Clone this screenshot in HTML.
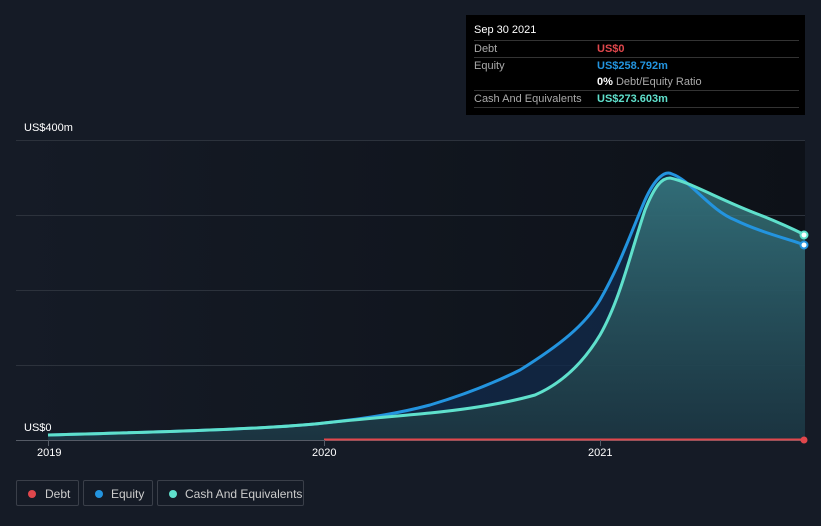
<!DOCTYPE html>
<html><head><style>
body{margin:0;width:821px;height:526px;background:#151b26;font-family:"Liberation Sans",sans-serif;overflow:hidden;position:relative}
.t{position:absolute;font-size:11px;color:#fff}
.tip{position:absolute;left:466px;top:15px;width:339px;height:100px;background:#000;font-size:11px}
.tip .r{position:absolute;left:8px;right:6px;border-top:1px solid #333;height:16px}
.leg{position:absolute;top:480px;height:26px;border:1px solid #3a3f49;border-radius:2px;color:#ccc;font-size:12px;line-height:26px;box-sizing:border-box}
.leg i{position:absolute;left:11px;top:9px;width:8px;height:8px;border-radius:50%}
</style></head><body>
<svg width="821" height="526" style="position:absolute;left:0;top:0">
<defs><linearGradient id="bg" x1="0" x2="1"><stop offset="0" stop-color="#151b26"/><stop offset="1" stop-color="#0d1118"/></linearGradient>
<linearGradient id="cf" x1="0" y1="0" x2="0" y2="1"><stop offset="0" stop-color="#3a7f85" stop-opacity="0.8"/><stop offset="1" stop-color="#1f3a40" stop-opacity="0.7"/></linearGradient></defs>
<rect x="16" y="140" width="789" height="300" fill="url(#bg)"/>
<g stroke="#2c323c" stroke-width="1"><line x1="16" x2="805" y1="140.5" y2="140.5"/><line x1="16" x2="805" y1="215.5" y2="215.5"/><line x1="16" x2="805" y1="290.5" y2="290.5"/><line x1="16" x2="805" y1="365.5" y2="365.5"/></g>
<path d="M48,435 C200,431 280,428 324,423 C370,418 400,413 430,405 C470,393 500,380 520,370 C560,345 585,325 600,300 C620,265 630,235 645,200 C655,178 665,170 672,174 C690,180 710,210 735,220 C760,232 785,238 805,245 L805,440 L48,440Z" fill="#12294a" opacity="0.8"/>
<path d="M48,435 C200,431 280,428 324,423 C370,418 400,416 430,413 C480,408 510,402 535,395 C565,382 585,360 600,335 C620,300 630,255 645,210 C655,185 662,178 670,178 C690,182 720,200 760,215 C780,223 795,230 805,235 L805,440 L48,440Z" fill="url(#cf)"/>
<path d="M48,435 C200,431 280,428 324,423 C370,418 400,413 430,405 C470,393 500,380 520,370 C560,345 585,325 600,300 C620,265 630,235 645,200 C655,178 665,170 672,174 C690,180 710,210 735,220 C760,232 785,238 805,245" fill="none" stroke="#2394df" stroke-width="3"/>
<path d="M48,435 C200,431 280,428 324,423 C370,418 400,416 430,413 C480,408 510,402 535,395 C565,382 585,360 600,335 C620,300 630,255 645,210 C655,185 662,178 670,178 C690,182 720,200 760,215 C780,223 795,230 805,235" fill="none" stroke="#5fe0cc" stroke-width="3"/>
<line x1="16" x2="805" y1="440.5" y2="440.5" stroke="#555b66"/>
<line x1="324" x2="805" y1="439.5" y2="439.5" stroke="#e0474c" stroke-width="2"/>
<g stroke="#555b66"><line x1="48.5" x2="48.5" y1="440" y2="446"/><line x1="324.5" x2="324.5" y1="440" y2="446"/><line x1="600.5" x2="600.5" y1="440" y2="446"/></g>
<circle cx="804" cy="245" r="3.5" fill="#fff" stroke="#2394df" stroke-width="2"/>
<circle cx="804" cy="235" r="3.5" fill="#fff" stroke="#5fe0cc" stroke-width="2"/>
<circle cx="804" cy="440" r="3.5" fill="#e0474c"/>
</svg>
<div class="t" style="left:24px;top:122px">US$400m</div>
<div class="t" style="left:24px;top:422px">US$0</div>
<div class="t" style="left:37px;top:447px">2019</div>
<div class="t" style="left:312px;top:447px">2020</div>
<div class="t" style="left:588px;top:447px">2021</div>
<div class="tip">
<div style="position:absolute;left:8px;top:9px;color:#fff">Sep 30 2021</div>
<div class="r" style="top:25px"><span style="position:absolute;left:0;top:2px;color:#aaa">Debt</span><span style="position:absolute;left:123px;top:2px;color:#e0474c;font-weight:bold">US$0</span></div>
<div class="r" style="top:42px"><span style="position:absolute;left:0;top:2px;color:#aaa">Equity</span><span style="position:absolute;left:123px;top:2px;color:#2394df;font-weight:bold">US$258.792m</span><span style="position:absolute;left:123px;top:18px;color:#aaa"><b style="color:#fff">0%</b> Debt/Equity Ratio</span></div>
<div class="r" style="top:75px"><span style="position:absolute;left:0;top:2px;color:#aaa">Cash And Equivalents</span><span style="position:absolute;left:123px;top:2px;color:#5fe0cc;font-weight:bold">US$273.603m</span></div>
<div class="r" style="top:92px"></div>
</div>
<div class="leg" style="left:16px;width:63px"><i style="background:#e0474c"></i><span style="position:absolute;left:28px">Debt</span></div>
<div class="leg" style="left:83px;width:70px"><i style="background:#2394df"></i><span style="position:absolute;left:27px">Equity</span></div>
<div class="leg" style="left:157px;width:147px"><i style="background:#5fe0cc"></i><span style="position:absolute;left:27px">Cash And Equivalents</span></div>
</body></html>
